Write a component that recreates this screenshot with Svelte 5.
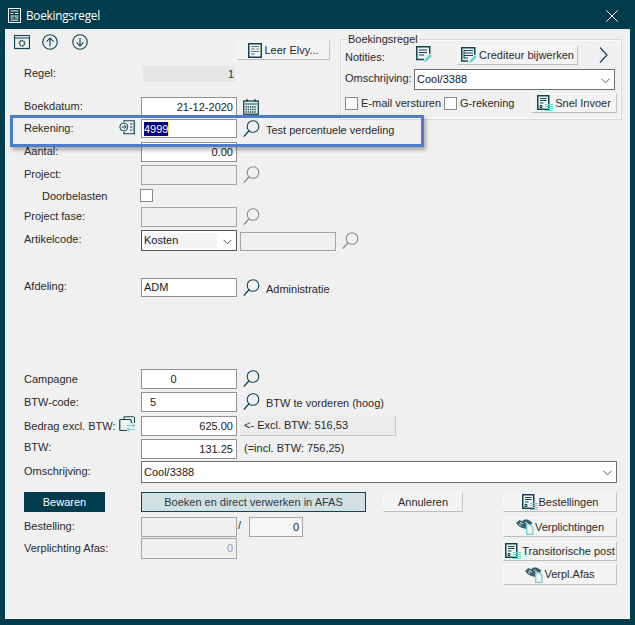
<script>
  const dark = '#0f4654';
  const teal = '#6fd0cc';
</script>

{#snippet search(color = dark)}
  <svg class="search" width="18" height="18" viewBox="0 0 18 18" fill="none" stroke={color} stroke-width="1.1">
    <circle cx="10" cy="6.5" r="5.8" />
    <path d="M6 10.8 L0.8 16.6" stroke-width="1.4" />
  </svg>
{/snippet}

{#snippet chevron()}
  <svg class="chev" width="9" height="6" viewBox="0 0 9 6" fill="none" stroke="#555" stroke-width="1"><path d="M0.5 0.8 L4.5 4.8 L8.5 0.8" /></svg>
{/snippet}

{#snippet docIcon()}
  <svg width="16" height="16" viewBox="0 0 16 16" fill="none">
    <rect x="0.75" y="0.75" width="11" height="13.5" stroke={dark} stroke-width="1.5" />
    <path d="M3 3.5h6.5M3 5.5h6.5M3 8h3.5M3 10.5h2v2H3z" stroke={dark} />
    <path d="M8 9.5h8M8 11.5h8M8 13.5h8M8 15.5h8" stroke={teal} />
  </svg>
{/snippet}

{#snippet shake()}
  <svg width="18" height="16" viewBox="0 0 18 16" fill="none">
    <path d="M0.5 4 L3 1.5 L6 2.5 L9 0.8 L12 1 L16 3.5 L14 7 L10 9.5 L6 8.5 L3 7 Z" fill="#3f6470" stroke={dark} stroke-width="0.6" />
    <path d="M4 3.5 L7 5 M9 3 L12 5 M3 5.5 L5 6.5" stroke="#f0f0f0" />
    <path d="M10.7 5.7h3.2l3 2.6v7h-6.2z" fill="#f4f4f4" stroke={teal} stroke-width="1.3" />
  </svg>
{/snippet}

<div class="window">
  <header class="titlebar">
    <svg class="app" width="13" height="15" viewBox="0 0 13 15" fill="none" stroke="#fff">
      <rect x="0.5" y="0.5" width="12" height="14" />
      <path d="M2.5 3h8M2.5 5.5h3M7 5.5h3.5M2.5 8h8M2.5 10h3M7 10h3.5M2.5 12.2h8" />
    </svg>
    <h1>Boekingsregel</h1>
    <svg class="close" width="12" height="12" viewBox="0 0 12 12" stroke="#fff" stroke-width="1"><path d="M0.5 0.5 L11.5 11.5 M11.5 0.5 L0.5 11.5" /></svg>
  </header>

  <main class="body">
    <div class="top">
      <div class="top-left">
        <div class="toolbar">
          <svg class="tool" width="16" height="15" viewBox="0 0 16 15" fill="none" stroke={dark}>
            <rect x="0.5" y="0.5" width="15" height="13" stroke-width="1.2" />
            <path d="M0.5 3h15" />
            <circle cx="8" cy="8.2" r="2.6" stroke-width="1.6" stroke-dasharray="1.6 0.7" />
          </svg>
          <svg class="tool up" width="16" height="16" viewBox="0 0 17 17" fill="none" stroke={dark} stroke-width="1.2">
            <circle cx="8.5" cy="8.5" r="7.7" /><path d="M8.5 13V4.5M4.8 8 L8.5 4.2 L12.2 8" />
          </svg>
          <svg class="tool down" width="16" height="16" viewBox="0 0 17 17" fill="none" stroke={dark} stroke-width="1.2">
            <circle cx="8.5" cy="8.5" r="7.7" /><path d="M8.5 4V12.5M4.8 9 L8.5 12.8 L12.2 9" />
          </svg>
          <button class="btn elvy">
            <svg width="14" height="15" viewBox="0 0 14 15" fill="none">
              <rect x="0.75" y="0.75" width="12.5" height="13.5" stroke={dark} stroke-width="1.5" />
              <path d="M3 3.5h8M3 6h4M8.5 6H11M3 8.5h8M3 11h4" stroke="#5e7a84" />
            </svg>
            Leer Elvy...
          </button>
        </div>
        <div class="row regel">
          <span class="label">Regel:</span>
          <div class="field readonly num">1</div>
        </div>
        <div class="row boekdatum">
          <span class="label lift3">Boekdatum:</span>
          <div class="field num">21-12-2020</div>
          <svg class="cal" width="16" height="16" viewBox="0 0 16 16" fill="none" stroke={dark}>
            <rect x="0.75" y="2" width="14.5" height="13.25" stroke-width="1.3" />
            <path d="M4 0v3M12 0v3" stroke-width="1.3" />
            <path d="M2 5h12" />
            <path d="M2.5 8h11M2.5 10.5h11M2.5 13h11" stroke-width="1.4" stroke-dasharray="1.4 0.8" />
          </svg>
        </div>
      </div>

      <fieldset class="group">
        <legend>Boekingsregel</legend>
        <div class="g-row notes">
          <span class="g-label">Notities:</span>
          <svg class="note" width="17" height="17" viewBox="0 0 17 17" fill="none">
            <path d="M8 13.5H0.75V0.75h13v7" stroke={dark} stroke-width="1.5" />
            <path d="M3 4h8M3 6.5h8M3 9h5" stroke={dark} />
            <path d="M8 16 L9 13 L14 8 L16 10 L11 15 Z" fill={teal} />
          </svg>
          <button class="btn cred">
            <svg width="17" height="17" viewBox="0 0 17 17" fill="none">
              <path d="M7 14H0.75V0.75h13v7" stroke={dark} stroke-width="1.5" />
              <path d="M3 3.5h9M3 6h9M3 8.5h9M3 11h4M3 3.5v8" stroke={dark} />
              <path d="M8 16 L9 13 L14 8 L16 10 L11 15 Z" fill={teal} />
            </svg>
            Crediteur bijwerken
          </button>
          <svg class="next" width="9" height="16" viewBox="0 0 9 16" fill="none" stroke={dark} stroke-width="1.2"><path d="M1 0.5 L8 8 L1 15.5" /></svg>
        </div>
        <div class="g-row oms">
          <span class="g-label">Omschrijving:</span>
          <div class="field select wide">Cool/3388 {@render chevron()}</div>
        </div>
        <div class="g-row checks">
          <span class="box"></span><span class="c1">E-mail versturen</span>
          <span class="box"></span><span class="c2">G-rekening</span>
          <button class="btn snel">{@render docIcon()} Snel Invoer</button>
        </div>
      </fieldset>
    </div>

    <div class="row rekening">
      <span class="label lift0">Rekening:</span>
      <svg class="link" width="16" height="15" viewBox="0 0 16 15" fill="none" stroke={dark}>
        <path d="M5 2V0.75h10.25v13H5V12" stroke-width="1.2" />
        <circle cx="4.8" cy="7" r="4" fill="#f0f0f0" />
        <path d="M2.5 7h4.5M5.4 5.2 L7.2 7 L5.4 8.8M11 4h2.5M11 7h2.5M11 10h2.5" />
      </svg>
      <div class="field"><span class="sel">4999</span></div>
      {@render search()}
      <span class="desc d3">Test percentuele verdeling</span>
    </div>
    <div class="row aantal">
      <span class="label">Aantal:</span>
      <div class="field num">0.00</div>
    </div>
    <div class="row project">
      <span class="label">Project:</span>
      <div class="field off"></div>
      {@render search('#8a8a8a')}
    </div>
    <div class="row doorbelasten">
      <span class="label sub">Doorbelasten</span>
      <span class="box"></span>
    </div>
    <div class="row fase">
      <span class="label">Project fase:</span>
      <div class="field off"></div>
      {@render search('#8a8a8a')}
    </div>
    <div class="row artikel">
      <span class="label">Artikelcode:</span>
      <div class="field select kosten"><span class="kost">Kosten</span>{@render chevron()}</div>
      <div class="field off art2"></div>
      {@render search('#8a8a8a')}
    </div>
    <div class="row afdeling">
      <span class="label">Afdeling:</span>
      <div class="field">ADM</div>
      {@render search()}
      <span class="desc d4">Administratie</span>
    </div>
    <div class="row campagne">
      <span class="label lift0">Campagne</span>
      <div class="field center">0</div>
      {@render search()}
    </div>
    <div class="row btw">
      <span class="label lift0">BTW-code:</span>
      <div class="field code">5</div>
      {@render search()}
      <span class="desc d1">BTW te vorderen (hoog)</span>
    </div>
    <div class="row bedrag">
      <span class="label narrow">Bedrag excl. BTW:</span>
      <svg class="swap" width="17" height="17" viewBox="0 0 17 17" fill="none">
        <path d="M5 3V0.75h9.5a1 1 0 0 1 1 1V7" stroke={dark} />
        <path d="M8 14.5H1.75a1 1 0 0 1-1-1V4.5a1 1 0 0 1 1-1h9.5a1 1 0 0 1 1 1V7" stroke={dark} stroke-width="1.2" />
        <path d="M8 9.5h8M13.5 7.5l2.5 2-2.5 2M16 13.5H8M10.5 11.5l-2.5 2 2.5 2" stroke={teal} />
      </svg>
      <div class="field num">625.00</div>
      <div class="excl">&lt;- Excl. BTW: 516,53</div>
    </div>
    <div class="row btwbedrag">
      <span class="label lift4">BTW:</span>
      <div class="field num">131.25</div>
      <span class="incl">(=incl. BTW: 756,25)</span>
    </div>
    <div class="row omschrijving">
      <span class="label">Omschrijving:</span>
      <div class="field select full">Cool/3388 {@render chevron()}</div>
    </div>

    <div class="bottom">
      <div class="bottom-left">
        <div class="actions">
          <button class="save">Bewaren</button>
          <button class="book">Boeken en direct verwerken in AFAS</button>
          <button class="btn cancel">Annuleren</button>
        </div>
        <div class="row bestelling">
          <span class="label">Bestelling:</span>
          <div class="field off"></div>
          <span class="slash">/</span>
          <div class="field num small">0</div>
        </div>
        <div class="row verplichting">
          <span class="label lift0">Verplichting Afas:</span>
          <div class="field off num muted">0</div>
        </div>
      </div>
      <div class="side">
        <button class="btn s1">{@render docIcon()} Bestellingen</button>
        <button class="btn s2">{@render shake()} Verplichtingen</button>
        <button class="btn s3">{@render docIcon()} Transitorische post</button>
        <button class="btn s4">{@render shake()} Verpl.Afas</button>
      </div>
    </div>

    <div class="highlight"></div>
  </main>
</div>

<style>
  :global(body) { margin: 0; }
  .window {
    width: 635px; height: 625px; box-sizing: border-box;
    background: #013c4d; padding: 0 5px 6px 5px;
    font: 11px/13px "Liberation Sans", Arial, sans-serif; color: #2a2a2a;
    overflow: hidden;
  }
  .titlebar { height: 29px; display: flex; align-items: center; position: relative; }
  .app { margin: 1px 5px 0 3px; }
  h1 { font: 400 11.7px "Open Sans", sans-serif; color: #fff; margin: 0; letter-spacing: -0.2px; flex: 1; }
  .close { margin-right: 12px; margin-top: 2px; }

  .body {
    position: relative; height: 590px; box-sizing: border-box;
    background: #f0f0f0; padding-left: 19px;
    border-bottom: 1px solid #fafafa;
  }
  .top { display: flex; height: 89px; }
  .top-left { width: 316px; padding-top: 6px; flex: none; }
  .toolbar { height: 25px; display: flex; align-items: flex-start; position: relative; margin-left: -10px; }
  .tool { flex: none; }
  .up { margin-left: 12px; margin-top: -1px; }
  .down { margin-left: 14px; margin-top: -1px; }
  .elvy { margin-left: auto; margin-top: 5px; width: 93px; height: 20px; margin-right: 10px; }

  .row { display: flex; align-items: center; height: 20px; }
  .label { width: 117px; flex: none; margin-bottom: 2px; }
  .lift0 { margin-bottom: 0; }
  .lift3 { margin-bottom: 3px; }
  .lift4 { margin-bottom: 4px; }
  .field {
    width: 96px; height: 100%; box-sizing: border-box; flex: none;
    background: #fff; border: 1px solid #919191; padding: 0 3px 0 2px;
    display: flex; align-items: center; white-space: nowrap; color: #1a1a1a;
  }
  .num { justify-content: flex-end; }
  .center { justify-content: center; padding-right: 33px; }
  .code { padding-left: 8px; }
  .off { background: #f0f0f0; border-color: #a5a5a5; }
  .muted { color: #9a9a9a; }
  .readonly { background: #e6e6e6; border: none; margin-left: 2px; width: 92px; color: #333; padding-right: 1px; }
  .select { position: relative; border-color: #6f6f6f; }
  .chev { position: absolute; right: 4px; top: 50%; margin-top: -2px; }
  .search { margin-left: 6px; flex: none; }
  .desc { margin-left: 5px; }
  .d1 { margin-top: 2px; }
  .d3 { margin-top: 3px; }
  .d4 { margin-top: 4px; }

  .regel { height: 16px; margin-top: 6px; }
  .boekdatum { height: 21px; margin-top: 15px; }
  .cal { margin-left: 6px; margin-bottom: 2px; }
  .rekening { height: 19px; margin-top: 1px; position: relative; }
  .rekening .label { width: 95px; }
  .link { margin-right: 6px; margin-bottom: 3px; flex: none; }
  .sel { background: #000080; color: #fff; line-height: 14px; box-shadow: 1px 0 0 #f5e96a; }
  .aantal { margin-top: 4px; }
  .project { margin-top: 3px; }
  .doorbelasten { height: 15px; margin-top: 3px; }
  .sub { padding-left: 18px; width: 98px; margin-bottom: -1px; }
  .box { width: 13px; height: 13px; background: #fff; border: 1px solid #8a8a8a; box-sizing: border-box; flex: none; display: block; }
  .fase { margin-top: 4px; }
  .artikel { height: 21px; margin-top: 3px; }
  .kosten { border-color: #555; }
  .kost { background: #f4f4f4; flex: none; width: 73px; line-height: 15px; }
  .art2 { margin-left: 3px; height: 19px; margin-top: 1px; }
  .afdeling { height: 19px; margin-top: 27px; }
  .campagne { margin-top: 72px; }
  .btw { margin-top: 3px; }
  .bedrag { margin-top: 4px; }
  .narrow { width: 95px; white-space: nowrap; margin-bottom: 0; }
  .swap { margin-right: 5px; margin-bottom: 4px; flex: none; }
  .excl {
    width: 156px; height: 20px; margin-left: 3px; box-sizing: border-box;
    background: #ececec; border-right: 1px solid #c6c6c6; border-bottom: 1px solid #c6c6c6;
    display: flex; align-items: center; padding-left: 4px;
  }
  .btwbedrag { margin-top: 3px; }
  .incl { margin-left: 7px; margin-bottom: 2px; }
  .omschrijving { height: 22px; margin-top: 2px; }
  .full { width: 476px; }

  .bottom { display: flex; margin-top: 9px; }
  .bottom-left { width: 479px; flex: none; }
  .actions { display: flex; height: 20px; }
  .save, .book, .btn { font: inherit; cursor: default; padding: 0; }
  .save { width: 81px; background: #013c4d; color: #fff; border: none; }
  .book { width: 225px; margin-left: 36px; background: #d2e0e1; border: 1px solid #0f4654; color: #2a3a3e; }
  .cancel { width: 80px; margin-left: 17px; }
  .btn {
    display: flex; align-items: center; justify-content: center; gap: 2px;
    background: #f3f3f3; color: #2a2a2a; white-space: nowrap;
    border: 1px solid #f8f8f8; border-right-color: #c4c4c4; border-bottom-color: #bcbcbc;
  }
  .bestelling { margin-top: 5px; }
  .slash { margin: 0 9px 4px 1px; width: 2px; }
  .small { width: 54px; background: #f6f6f6; border-color: #a5a5a5; }
  .verplichting { height: 21px; margin-top: 1px; }

  .side { width: 114px; display: flex; flex-direction: column; }
  .side .btn { width: 114px; box-sizing: border-box; gap: 1px; }
  .s1, .s2, .s3 { height: 20px; }
  .s2 { margin-top: 5px; }
  .s3 { margin-top: 4px; }
  .s4 { height: 21px; margin-top: 3px; }

  .group {
    margin: 10px 0 0 0; padding: 0; width: 282px; height: 81px; box-sizing: border-box;
    border: 1px solid #d8d8d8; box-shadow: inset 0 0 0 1px #fbfbfb; flex: none; min-width: 0;
    position: relative;
  }
  .group legend { position: absolute; left: 6px; top: -7px; padding: 0 1px; background: #f0f0f0; line-height: 12px; }
  .g-row { position: absolute; left: 4px; display: flex; align-items: center; }
  .g-label { flex: none; }
  .notes { top: 5px; height: 20px; }
  .notes .g-label { width: 71px; margin-top: 4px; }
  .note { margin-top: -2px; }
  .cred { width: 121px; height: 20px; margin-left: 24px; box-sizing: border-box; gap: 1px; }
  .next { margin-left: 21px; }
  .oms { top: 29px; height: 21px; }
  .oms .g-label { width: 69px; margin-bottom: 2px; }
  .wide { width: 201px; border-color: #6f6f6f; }
  .checks { top: 53px; height: 20px; width: 272px; }
  .c1 { margin-left: 3px; width: 83px; }
  .c2 { margin-left: 3px; width: 71px; }
  .snel { width: 86px; height: 20px; box-sizing: border-box; }

  .highlight {
    position: absolute; left: 5px; top: 86px; width: 414px; height: 32px; box-sizing: border-box;
    border: 3px solid #4f7cc8; box-shadow: 2px 3px 4px rgba(0,0,0,0.3); pointer-events: none;
  }
</style>
